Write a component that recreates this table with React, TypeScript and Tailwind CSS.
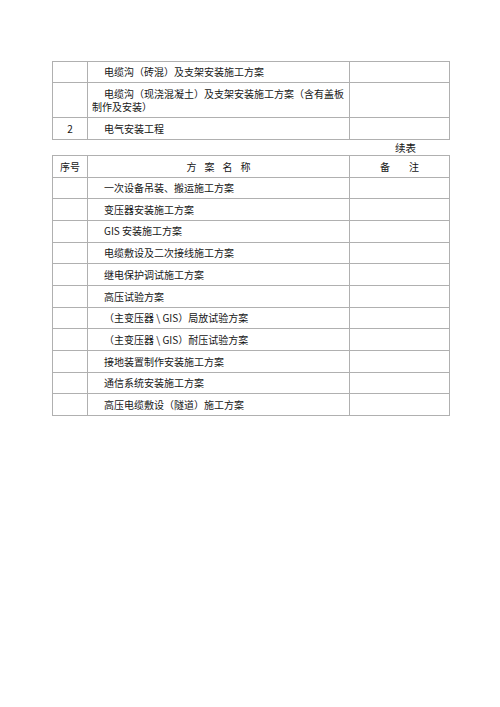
const font = { fontFamily: '"Noto Sans CJK SC", "Liberation Serif", serif' };

const firstRows: { no: string; name: string; h: string }[] = [
  { no: "", name: "电缆沟（砖混）及支架安装施工方案", h: "h-[21px]" },
  { no: "", name: "电缆沟（现浇混凝土）及支架安装施工方案（含有盖板制作及安装）", h: "h-[35px]" },
  { no: "2", name: "电气安装工程", h: "h-[22px]" },
];

const secondRows = [
  "一次设备吊装、搬运施工方案",
  "变压器安装施工方案",
  "GIS 安装施工方案",
  "电缆敷设及二次接线施工方案",
  "继电保护调试施工方案",
  "高压试验方案",
  "（主变压器 \\ GIS）局放试验方案",
  "（主变压器 \\ GIS）耐压试验方案",
  "接地装置制作安装施工方案",
  "通信系统安装施工方案",
  "高压电缆敷设（隧道）施工方案",
];

const cell = "border border-[#b0b0b0] p-0 align-middle";

function Cols() {
  return (
    <colgroup>
      <col className="w-[35px]" />
      <col className="w-[262px]" />
      <col className="w-[100px]" />
    </colgroup>
  );
}

export default function App() {
  return (
    <div className="min-h-[707px] w-[500px] bg-white pl-[52px] pt-[61px] text-[10px] leading-[13.5px] text-[#161616]" style={font}>
      <table className="w-[397px] table-fixed border-collapse border-[1.5px] border-[#6a6a6a]">
        <Cols />
        <tbody>
          {firstRows.map((r, i) => (
            <tr key={i} className={r.h}>
              <td className={`${cell} text-center`}>{r.no}</td>
              <td className={`${cell} pl-[4px] pr-[4px] indent-[12px]`}>{r.name}</td>
              <td className={cell}></td>
            </tr>
          ))}
        </tbody>
      </table>

      <div className="flex h-[15px] w-[364px] items-center justify-end text-[10.5px]">续表</div>

      <table className="w-[397px] table-fixed border-collapse border-[1.5px] border-[#6a6a6a]">
        <Cols />
        <tbody>
          <tr className="h-[21.5px]">
            <td className={`${cell} text-center`}>序号</td>
            <td className={`${cell} text-center`}>
              <span className="mr-[-8px] tracking-[8px]">方案名称</span>
            </td>
            <td className={`${cell} text-center`}>
              <span className="mr-[-19px] tracking-[19px]">备注</span>
            </td>
          </tr>
          {secondRows.map((name, i) => (
            <tr key={i} className="h-[21.7px]">
              <td className={cell}></td>
              <td className={`${cell} pl-[4px] pr-[4px] indent-[12px]`}>{name}</td>
              <td className={cell}></td>
            </tr>
          ))}
        </tbody>
      </table>
    </div>
  );
}
